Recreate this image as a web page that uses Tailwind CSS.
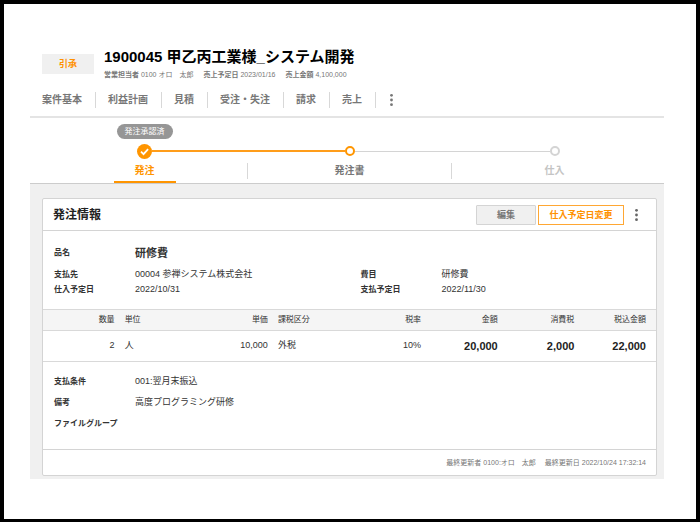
<!DOCTYPE html>
<html lang="ja">
<head>
  <meta charset="UTF-8" />
  <meta name="viewport" content="width=device-width, initial-scale=1.0"/>
  <title>発注情報</title>
  <script src="https://cdn.jsdelivr.net/npm/@tailwindcss/browser@4"></script>
</head>
<body class="min-h-screen bg-white border-4 border-b-3 border-black pl-[26px] pr-8 pt-[42px] pb-8 font-['Liberation_Sans','Noto_Sans_CJK_JP',sans-serif] text-[#333]">

  <!-- 案件ヘッダー -->
  <header class="border-b-2 border-[#e4e4e4]">
    <div class="flex items-center gap-[10px] px-3">
      <span class="w-[52px] h-5 bg-[#f0f0f0] text-[#ff9100] text-[9px] leading-5 font-bold text-center">引承</span>
      <div>
        <h1 class="text-[15px] leading-[22px] font-bold text-black">1900045 甲乙丙工業様_システム開発</h1>
        <p class="flex gap-[10px] pt-px text-[7px] leading-3 text-[#777] whitespace-pre"><span><b>営業担当者</b> 0100 オロ　太郎</span><span><b>売上予定日</b> 2023/01/16</span><span><b>売上金額</b> 4,100,000</span></p>
      </div>
    </div>

    <nav class="flex items-center px-3 pt-[11px] pb-2 text-[10px] leading-4 font-bold text-[#777]">
      <a href="#" class="pr-[13px] border-r border-[#d8d8d8]">案件基本</a>
      <a href="#" class="pl-3 pr-[13px] border-r border-[#d8d8d8]">利益計画</a>
      <a href="#" class="pl-3 pr-[13px] border-r border-[#d8d8d8]">見積</a>
      <a href="#" class="pl-3 pr-[13px] border-r border-[#d8d8d8]">受注・失注</a>
      <a href="#" class="pl-3 pr-[13px] border-r border-[#d8d8d8]">請求</a>
      <a href="#" class="pl-3 pr-[13px] border-r border-[#d8d8d8]">売上</a>
      <button type="button" aria-label="その他のメニュー" class="ml-[13px]">
        <svg class="w-[5px] h-[14px]" viewBox="0 0 5 14" fill="#777"><circle cx="2.500" cy="2.300" r="1.400"/><circle cx="2.500" cy="7" r="1.400"/><circle cx="2.500" cy="11.700" r="1.400"/></svg>
      </button>
    </nav>
  </header>

  <!-- 進捗ステップ -->
  <ol class="grid grid-cols-3 pl-3 pr-[7px] pt-[6px] border-b border-[#ccc] text-[10px] leading-4 font-bold text-center">
    <li class="flex flex-col items-center">
      <span class="h-[15px] px-2 rounded-full bg-[#969696] text-white text-[8px] leading-[15px] font-normal">発注承認済</span>
      <div class="flex items-center w-full h-4 mt-1">
        <span class="flex-1"></span>
        <svg class="w-[15px] h-[15px]" viewBox="0 0 15 15"><circle cx="7.500" cy="7.500" r="7.500" fill="#ff9500"/><path d="M4 7.700l2.500 2.400 4.600-4.900" fill="none" stroke="#fff" stroke-width="1.800"/></svg>
        <span class="flex-1 h-[2px] bg-[#ff9d1a]"></span>
      </div>
      <div class="flex justify-center w-full h-5 mt-1">
        <a href="#" class="px-[21px] border-b-2 border-[#ff9500] text-[#ff9500]">発注</a>
      </div>
    </li>
    <li class="flex flex-col items-center">
      <span class="h-[15px]"></span>
      <div class="flex items-center w-full h-4 mt-1">
        <span class="flex-1 h-[2px] bg-[#ff9d1a]"></span>
        <span class="size-[10px] rounded-full border-2 border-[#ff9500]"></span>
        <span class="flex-1 h-px bg-[#d4d4d4]"></span>
      </div>
      <a href="#" class="w-full mt-1 border-x border-[#d8d8d8] text-[#777]">発注書</a>
    </li>
    <li class="flex flex-col items-center">
      <span class="h-[15px]"></span>
      <div class="flex items-center w-full h-4 mt-1">
        <span class="flex-1 h-px bg-[#d4d4d4]"></span>
        <span class="size-[10px] rounded-full border-2 border-[#d4d4d4]"></span>
        <span class="flex-1"></span>
      </div>
      <a href="#" class="mt-1 text-[#c4c4c4]">仕入</a>
    </li>
  </ol>

  <main class="bg-[#f0f0f0] pl-3 pr-[7px] pt-[14px] pb-[3px]">
    <section class="bg-white border border-[#d4d4d4] rounded-[2px]">

      <div class="flex items-center h-8 pl-[10px] pr-[17px] border-b border-[#d4d4d4]">
        <h2 class="mr-auto text-[12px] leading-5 font-bold text-[#222]">発注情報</h2>
        <button type="button" class="w-[60px] h-5 border border-[#d4d4d4] rounded-[1px] bg-[#f0f0f0] text-[9px] leading-4 font-bold text-[#777]">編集</button>
        <button type="button" class="w-[86px] h-5 ml-[2px] border border-[#ffa733] bg-white text-[9px] leading-4 font-bold text-[#ff9100]">仕入予定日変更</button>
        <button type="button" aria-label="その他の操作" class="ml-[10px]">
          <svg class="w-[5px] h-[14px]" viewBox="0 0 5 14" fill="#666"><circle cx="2.500" cy="2.300" r="1.400"/><circle cx="2.500" cy="7" r="1.400"/><circle cx="2.500" cy="11.700" r="1.400"/></svg>
        </button>
      </div>

      <!-- 基本情報 -->
      <dl class="grid grid-cols-2 pt-3 pb-3 text-[9px] leading-[15px]">
        <div class="flex items-center col-span-2 px-[11px] pb-1 leading-5">
          <dt class="w-[81px] text-[8px] font-bold">品名</dt>
          <dd class="text-[11px] font-bold">研修費</dd>
        </div>
        <div class="flex px-[11px]">
          <dt class="w-[81px] text-[8px] font-bold">支払先</dt>
          <dd>00004 参禅システム株式会社</dd>
        </div>
        <div class="flex px-[11px]">
          <dt class="w-[81px] text-[8px] font-bold">費目</dt>
          <dd>研修費</dd>
        </div>
        <div class="flex px-[11px]">
          <dt class="w-[81px] text-[8px] font-bold">仕入予定日</dt>
          <dd>2022/10/31</dd>
        </div>
        <div class="flex px-[11px]">
          <dt class="w-[81px] text-[8px] font-bold">支払予定日</dt>
          <dd>2022/11/30</dd>
        </div>
      </dl>

      <!-- 明細 -->
      <table class="w-full table-fixed text-[9px]">
        <thead>
          <tr class="h-[21px] bg-[#f5f5f5] border-y border-[#d9d9d9] text-[8px]">
            <th class="px-[5px] text-right font-normal">数量</th>
            <th class="px-[5px] text-left font-normal">単位</th>
            <th class="px-[5px] text-right font-normal">単価</th>
            <th class="px-[5px] text-left font-normal">課税区分</th>
            <th class="px-[5px] text-right font-normal">税率</th>
            <th class="px-[5px] text-right font-normal">金額</th>
            <th class="px-[5px] text-right font-normal">消費税</th>
            <th class="pr-[10px] text-right font-normal">税込金額</th>
          </tr>
        </thead>
        <tbody>
          <tr class="h-[31px] border-b border-[#d9d9d9]">
            <td class="px-[5px] text-right">2</td>
            <td class="px-[5px]">人</td>
            <td class="px-[5px] text-right">10,000</td>
            <td class="px-[5px]">外税</td>
            <td class="px-[5px] text-right">10%</td>
            <td class="px-[5px] text-right text-[11px] font-bold text-[#222]">20,000</td>
            <td class="px-[5px] text-right text-[11px] font-bold text-[#222]">2,000</td>
            <td class="pr-[10px] text-right text-[11px] font-bold text-[#222]">22,000</td>
          </tr>
        </tbody>
      </table>

      <!-- 支払条件・備考 -->
      <dl class="flex flex-col gap-[6px] px-[11px] pt-3 pb-[18px] text-[9px] leading-[15px]">
        <div class="flex">
          <dt class="w-[81px] text-[8px] font-bold">支払条件</dt>
          <dd>001:翌月末振込</dd>
        </div>
        <div class="flex">
          <dt class="w-[81px] text-[8px] font-bold">備考</dt>
          <dd>高度プログラミング研修</dd>
        </div>
        <div class="flex">
          <dt class="w-[81px] text-[8px] font-bold">ファイルグループ</dt>
          <dd></dd>
        </div>
      </dl>

      <p class="flex justify-end gap-[9px] px-[10px] border-t border-[#d4d4d4] text-[7px] leading-[25px] text-[#777]">
        <span>最終更新者 0100:オロ　太郎</span>
        <span>最終更新日 2022/10/24 17:32:14</span>
      </p>
    </section>
  </main>

</body>
</html>
